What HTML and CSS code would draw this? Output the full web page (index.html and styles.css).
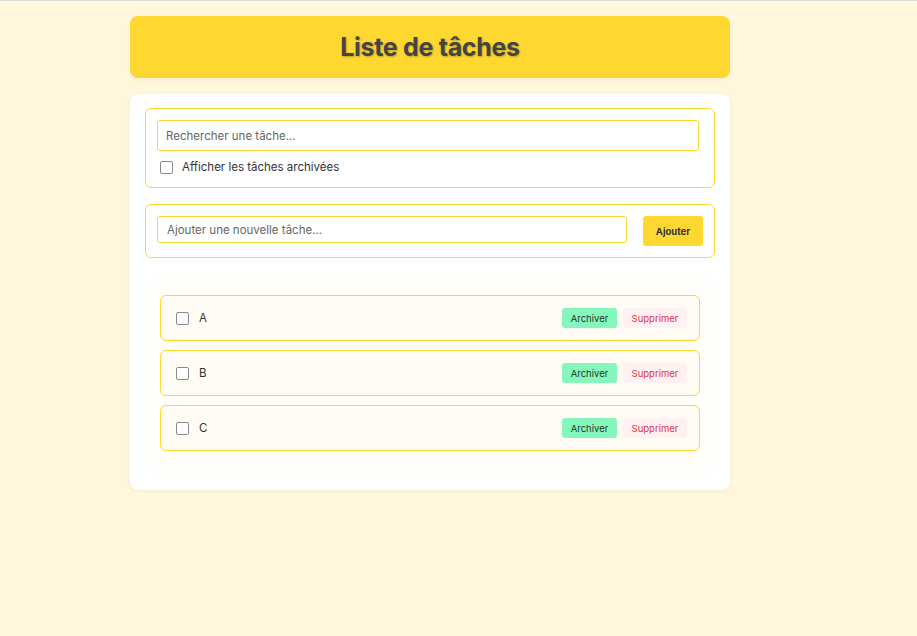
FILE: index.html
```html
<!DOCTYPE html>
<html lang="fr">
<head>
<meta charset="utf-8">
<title>Liste de tâches</title>
<link rel="stylesheet" href="styles.css">
</head>
<body>
<div class="page">
  <div class="container">
    <header class="header"><h1>Liste de tâches</h1></header>
    <main class="card">
      <section class="box search-box">
        <input class="input search-input" type="text" placeholder="Rechercher une tâche...">
        <label class="check-row"><input type="checkbox" class="cb"> <span>Afficher les tâches archivées</span></label>
      </section>
      <section class="box add-box">
        <input class="input add-input" type="text" placeholder="Ajouter une nouvelle tâche...">
        <button class="btn-add">Ajouter</button>
      </section>
      <section class="list">
        <div class="item">
          <label class="item-left"><input type="checkbox" class="cb"><span>A</span></label>
          <div class="actions"><button class="btn-archive">Archiver</button><button class="btn-delete">Supprimer</button></div>
        </div>
        <div class="item">
          <label class="item-left"><input type="checkbox" class="cb"><span>B</span></label>
          <div class="actions"><button class="btn-archive">Archiver</button><button class="btn-delete">Supprimer</button></div>
        </div>
        <div class="item">
          <label class="item-left"><input type="checkbox" class="cb"><span>C</span></label>
          <div class="actions"><button class="btn-archive">Archiver</button><button class="btn-delete">Supprimer</button></div>
        </div>
      </section>
    </main>
  </div>
</div>
</body>
</html>
```

FILE: styles.css
```css
* { box-sizing: border-box; }
html, body { margin: 0; padding: 0; }
body {
  background: #fff7dc;
  font-family: Inter, "Liberation Sans", Arial, sans-serif;
  color: #333;
  min-height: 636px;
}
.page {
  border-top: 1px solid #dcdcdc;
  padding-top: 15px;
}
.container {
  width: 600px;
  margin-left: 130px;
}
.header {
  background: #ffd731;
  border-radius: 8px;
  height: 62px;
  display: flex;
  align-items: center;
  justify-content: center;
  box-shadow: 0 2px 4px rgba(0,0,0,0.04);
}
.header h1 {
  margin: 0;
  font-size: 25px;
  font-weight: 700;
  color: #444;
  text-shadow: 1px 1px 2px rgba(0,0,0,0.25);
  letter-spacing: -0.3px;
}
.card {
  margin-top: 16px;
  background: #fff;
  border-radius: 8px;
  padding: 14px 15px 18px;
  box-shadow: 0 1px 4px rgba(0,0,0,0.06);
}
.box {
  border: 1px solid #ffd731;
  border-radius: 6px;
  padding: 11px;
}
.search-box { height: 80px; padding-right: 15px; }
.input {
  display: block;
  border: 1px solid #ffd731;
  border-radius: 3px;
  font-family: inherit;
  font-size: 11.5px;
  color: #333;
  background: #fff;
  outline: none;
}
.input::placeholder { color: #666; }
.search-input {
  width: 100%;
  height: 31px;
  padding: 0 8px;
}
.check-row {
  display: flex;
  align-items: center;
  gap: 9px;
  margin-top: 9px;
  font-size: 11.5px;
  color: #333;
  padding-left: 3px;
}
.cb {
  -webkit-appearance: none;
  appearance: none;
  width: 13px;
  height: 13px;
  margin: 0;
  border: 1px solid #8a8a8a;
  border-radius: 2px;
  background: #fff;
  flex: none;
}
.add-box {
  margin-top: 16px;
  display: flex;
  align-items: flex-start;
  gap: 16px;
}
.add-input {
  flex: 1;
  height: 27px;
  padding: 0 9px;
}
.btn-add {
  width: 60px;
  height: 30px;
  border: none;
  border-radius: 3px;
  background: #ffd731;
  color: #333;
  font-family: inherit;
  font-weight: 700;
  font-size: 9.5px;
  padding: 0;
}
.list {
  margin-top: 22px;
  background: #fffefb;
  border-radius: 6px;
  padding: 15px 15px 21px;
  box-shadow: 0 0 3px rgba(0,0,0,0.04);
  display: flex;
  flex-direction: column;
  gap: 9px;
}
.item {
  height: 46px;
  background: #fffcf5;
  border: 1px solid #ffd731;
  border-radius: 6px;
  display: flex;
  align-items: center;
  justify-content: space-between;
  padding: 0 12px 0 15px;
}
.item-left {
  display: flex;
  align-items: center;
  gap: 10px;
  font-size: 11.5px;
  color: #333;
}
.actions {
  display: flex;
  gap: 6px;
}
.btn-archive, .btn-delete {
  height: 20px;
  border: none;
  border-radius: 3px;
  font-family: inherit;
  font-size: 9.5px;
  padding: 0;
}
.btn-archive {
  width: 55px;
  background: #86f7bc;
  color: #1e3a2a;
}
.btn-delete {
  width: 64px;
  background: #fff1f1;
  color: #d93447;
}
```
